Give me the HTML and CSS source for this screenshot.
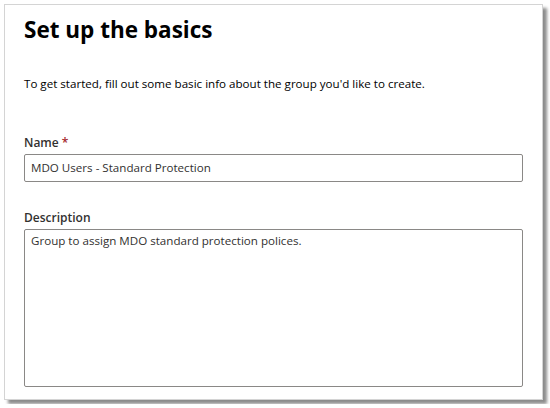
FILE: index.html
```html
<!DOCTYPE html>
<html lang="en">
<head>
    <meta charset="UTF-8">
    <title>Set up the basics</title>
    <link rel="stylesheet" href="styles.css">
</head>
<body>

<div class="panel">
    <h1>Set up the basics</h1>
    <p class="intro">To get started, fill out some basic info about the group you'd like to create.</p>

    <div class="field">
        <label>Name <span class="req">*</span></label>
        <div class="input">MDO Users - Standard Protection</div>
    </div>

    <div class="field">
        <label>Description</label>
        <div class="input textarea">Group to assign MDO standard protection polices.</div>
    </div>
</div>

</body>
</html>
```

FILE: styles.css
```css
body {
    margin: 0;
    padding: 4px;
    background: #fff;
    font-family: 'Open Sans', sans-serif;
    color: #323130;
}
.panel {
    width: 539px;
    height: 396px;
    box-sizing: border-box;
    border: 1px solid #d4d4d4;
    background: #fff;
    padding: 0 19px;
    box-shadow: 4px 4px 3px rgba(0, 0, 0, 0.45);
}
h1 {
    margin: 9px 0 0;
    font-size: 22.5px;
    font-weight: 700;
    color: #000;
    line-height: 32px;
}
.intro {
    margin: 29px 0 0;
    font-size: 11.6px;
    line-height: 18px;
    color: #000;
}
.field {
    margin-top: 41px;
}
.field + .field {
    margin-top: 27px;
}
label {
    display: block;
    font-size: 12px;
    font-weight: 600;
    line-height: 18px;
    margin-bottom: 2px;
}
.req {
    color: #a4262c;
}
.input {
    height: 28px;
    box-sizing: border-box;
    border: 1px solid #8a8886;
    border-radius: 2px;
    padding: 0 6px;
    font-size: 11.6px;
    line-height: 26px;
}
.textarea {
    height: 158px;
    line-height: 18px;
    padding-top: 2px;
}
```
